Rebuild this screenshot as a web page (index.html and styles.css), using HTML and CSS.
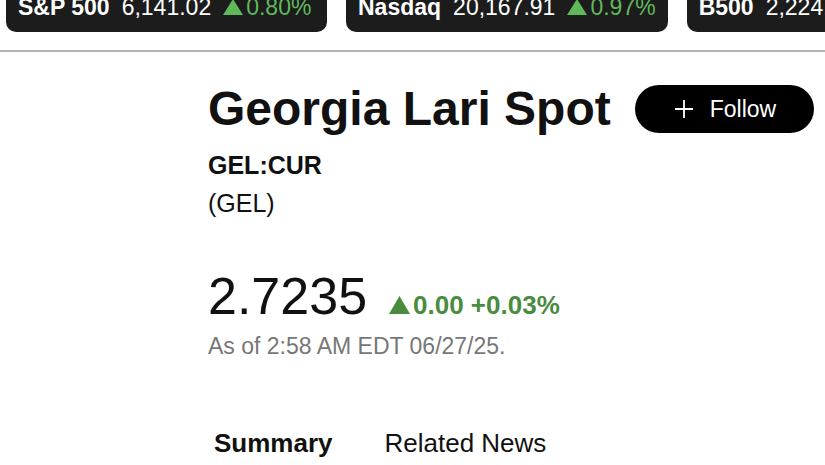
FILE: index.html
```html
<!DOCTYPE html>
<html lang="en">
<head>
  <meta charset="UTF-8">
  <meta name="viewport" content="width=device-width, initial-scale=1.0">
  <title>Georgia Lari Spot</title>
  <link rel="stylesheet" href="styles.css">
</head>
<body>
  <div class="ticker">
    <div class="pill">
      <span class="name">S&amp;P 500</span>
      <span class="value">6,141.02</span>
      <span class="up"><svg class="tri" width="20" height="16" viewBox="0 0 20 16"><path d="M10 0L20 16H0Z" fill="#5fb85a"/></svg>0.80%</span>
    </div>
    <div class="pill">
      <span class="name">Nasdaq</span>
      <span class="value">20,167.91</span>
      <span class="up"><svg class="tri" width="20" height="16" viewBox="0 0 20 16"><path d="M10 0L20 16H0Z" fill="#5fb85a"/></svg>0.97%</span>
    </div>
    <div class="pill">
      <span class="name">B500</span>
      <span class="value">2,224.35</span>
      <span class="up"><svg class="tri" width="20" height="16" viewBox="0 0 20 16"><path d="M10 0L20 16H0Z" fill="#5fb85a"/></svg>0.81%</span>
    </div>
  </div>
  <hr class="divider">

  <div class="quote">
    <div class="title-row">
      <h1>Georgia Lari Spot</h1>
      <button class="follow">
        <svg width="20" height="20" viewBox="0 0 20 20"><path d="M10 1v18M1 10h18" stroke="#fff" stroke-width="1.8" fill="none"/></svg>
        Follow
      </button>
    </div>
    <div class="symbol">GEL:CUR</div>
    <div class="currency">(GEL)</div>

    <div class="price-row">
      <span class="price">2.7235</span>
      <span class="change"><svg class="tri" width="21" height="18" viewBox="0 0 21 18"><path d="M10.5 0L21 18H0Z" fill="#4a8c3f"/></svg>0.00 +0.03%</span>
    </div>
    <div class="asof">As of 2:58 AM EDT 06/27/25.</div>

    <div class="tabs">
      <span class="tab active">Summary</span>
      <span class="tab">Related News</span>
    </div>
  </div>
</body>
</html>
```

FILE: styles.css
```css
html, body {
  margin: 0;
  padding: 0;
  font-family: "Liberation Sans", Arial, Helvetica, sans-serif;
  background-color: #ffffff;
  color: #111;
  overflow: hidden;
}
.ticker {
  display: flex;
  gap: 19px;
  margin-top: -5px;
  padding-left: 6px;
  white-space: nowrap;
  overflow: hidden;
}
.pill {
  flex: 0 0 321px;
  display: flex;
  align-items: baseline;
  gap: 12px;
  box-sizing: border-box;
  background-color: #1c1c1c;
  color: #fff;
  font-size: 23px;
  line-height: 24px;
  padding: 0 12px 13px;
  border-radius: 0 0 10px 10px;
}
.pill .name {
  font-weight: bold;
}
.pill .up {
  color: #5fb85a;
}
.tri {
  margin-right: 3px;
}
.divider {
  margin: 18px 0 0;
  border: none;
  height: 2px;
  background-color: #b4b4b4;
}
.quote {
  padding-left: 208px;
}
.title-row {
  display: flex;
  align-items: center;
  gap: 24px;
  margin-top: 29px;
}
h1 {
  margin: 0;
  font-size: 48px;
  line-height: 56px;
  font-weight: bold;
}
.follow {
  display: flex;
  align-items: center;
  gap: 16px;
  height: 48px;
  width: 179px;
  padding: 0 0 0 39px;
  border: none;
  border-radius: 24px;
  background-color: #000;
  color: #fff;
  font-family: inherit;
  font-size: 23px;
}
.symbol {
  margin-top: 10px;
  font-size: 25px;
  font-weight: bold;
  line-height: 36px;
}
.currency {
  font-size: 25px;
  line-height: 40px;
}
.price-row {
  display: flex;
  align-items: baseline;
  gap: 22px;
  margin-top: 44px;
}
.price {
  font-size: 52px;
  line-height: 58px;
}
.change {
  font-size: 26px;
  font-weight: bold;
  color: #4a8c3f;
}
.asof {
  margin-top: 6px;
  font-size: 23px;
  color: #777;
  line-height: 30px;
}
.tabs {
  display: flex;
  gap: 52px;
  margin-top: 67px;
  padding-left: 6px;
  font-size: 26px;
}
.tab.active {
  font-weight: bold;
}
```
